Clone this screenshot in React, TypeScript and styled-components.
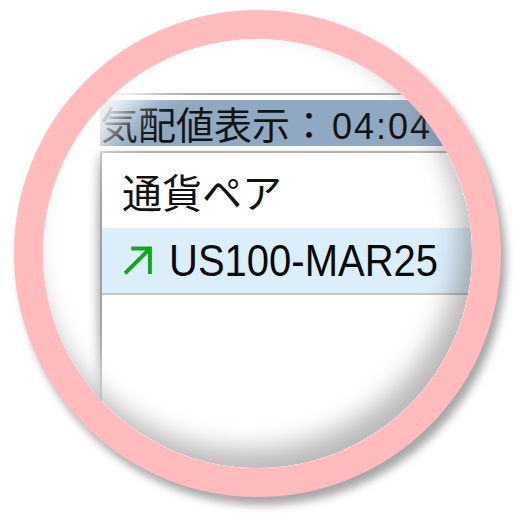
import styled, { createGlobalStyle } from "styled-components";

const GlobalStyle = createGlobalStyle`
  html, body {
    margin: 0;
    padding: 0;
    background: #ffffff;
  }
  body {
    font-family: "Noto Sans CJK JP", "Liberation Sans", sans-serif;
  }
`;

const Stage = styled.div`
  width: 522px;
  height: 522px;
  box-sizing: border-box;
  padding: 10px 0 0 14px;
  background: #ffffff;
  overflow: hidden;
`;

const Lens = styled.div`
  position: relative;
  width: 487px;
  height: 487px;
  box-sizing: border-box;
  border: 29px solid #ffbbbd;
  border-radius: 50%;
  background: #ffffff;
  overflow: hidden;
  box-shadow: 5px 8px 9px rgba(0, 0, 0, 0.35);

  &::after {
    content: "";
    position: absolute;
    inset: 0;
    border-radius: 50%;
    pointer-events: none;
    box-shadow: inset -12px -18px 26px rgba(0, 0, 0, 0.28),
      inset 26px 8px 30px rgba(255, 255, 255, 0.9);
  }
`;

const Window = styled.div`
  width: 520px;
  margin: 54px 0 0 57px;
`;

const TopRule = styled.div`
  height: 2px;
  background: #a9a9a9;
  margin-bottom: 5px;
`;

const TitleBar = styled.div`
  height: 46px;
  background: #8fa9c3;
  color: #141414;
  font-size: 38px;
  line-height: 46px;
  white-space: nowrap;
`;

const Clock = styled.span`
  font-family: "Liberation Sans", sans-serif;
  font-size: 36px;
  letter-spacing: 2px;
  margin-left: 4px;
`;

const Panel = styled.div`
  margin-top: 5px;
  height: 400px;
  background: #ffffff;
  border-top: 2px solid #b4b4b4;
  border-left: 2px solid #a0a0a0;
  box-shadow: -7px 0 9px -4px rgba(0, 0, 0, 0.3);
`;

const HeaderRow = styled.div`
  height: 75px;
  display: flex;
  align-items: center;
  padding-left: 20px;
  font-size: 40px;
  color: #111111;
`;

const Row = styled.div<{ $selected?: boolean }>`
  height: 65px;
  display: flex;
  align-items: center;
  gap: 17px;
  padding-left: 21px;
  background: ${(p) => (p.$selected ? "#ddeefb" : "#ffffff")};
  border-bottom: 2px solid #c6c6c6;
`;

const Symbol = styled.span`
  font-family: "Liberation Sans", Arial, sans-serif;
  font-size: 40px;
  color: #0a0a0a;
  line-height: 1;
  transform: scaleY(1.1);
`;

const UpArrow = () => (
  <svg width="29" height="29" viewBox="0 0 28 28">
    <path
      d="M2 26.5 L25 3.5 M8 2.5 H26 V27"
      fill="none"
      stroke="#15a51a"
      strokeWidth="3.8"
    />
  </svg>
);

export default function App() {
  return (
    <Stage>
      <GlobalStyle />
      <Lens>
        <Window>
          <TopRule />
          <TitleBar>
            気配値表示：<Clock>04:04</Clock>
          </TitleBar>
          <Panel>
            <HeaderRow>通貨ペア</HeaderRow>
            <Row $selected>
              <UpArrow />
              <Symbol>US100-MAR25</Symbol>
            </Row>
          </Panel>
        </Window>
      </Lens>
    </Stage>
  );
}
